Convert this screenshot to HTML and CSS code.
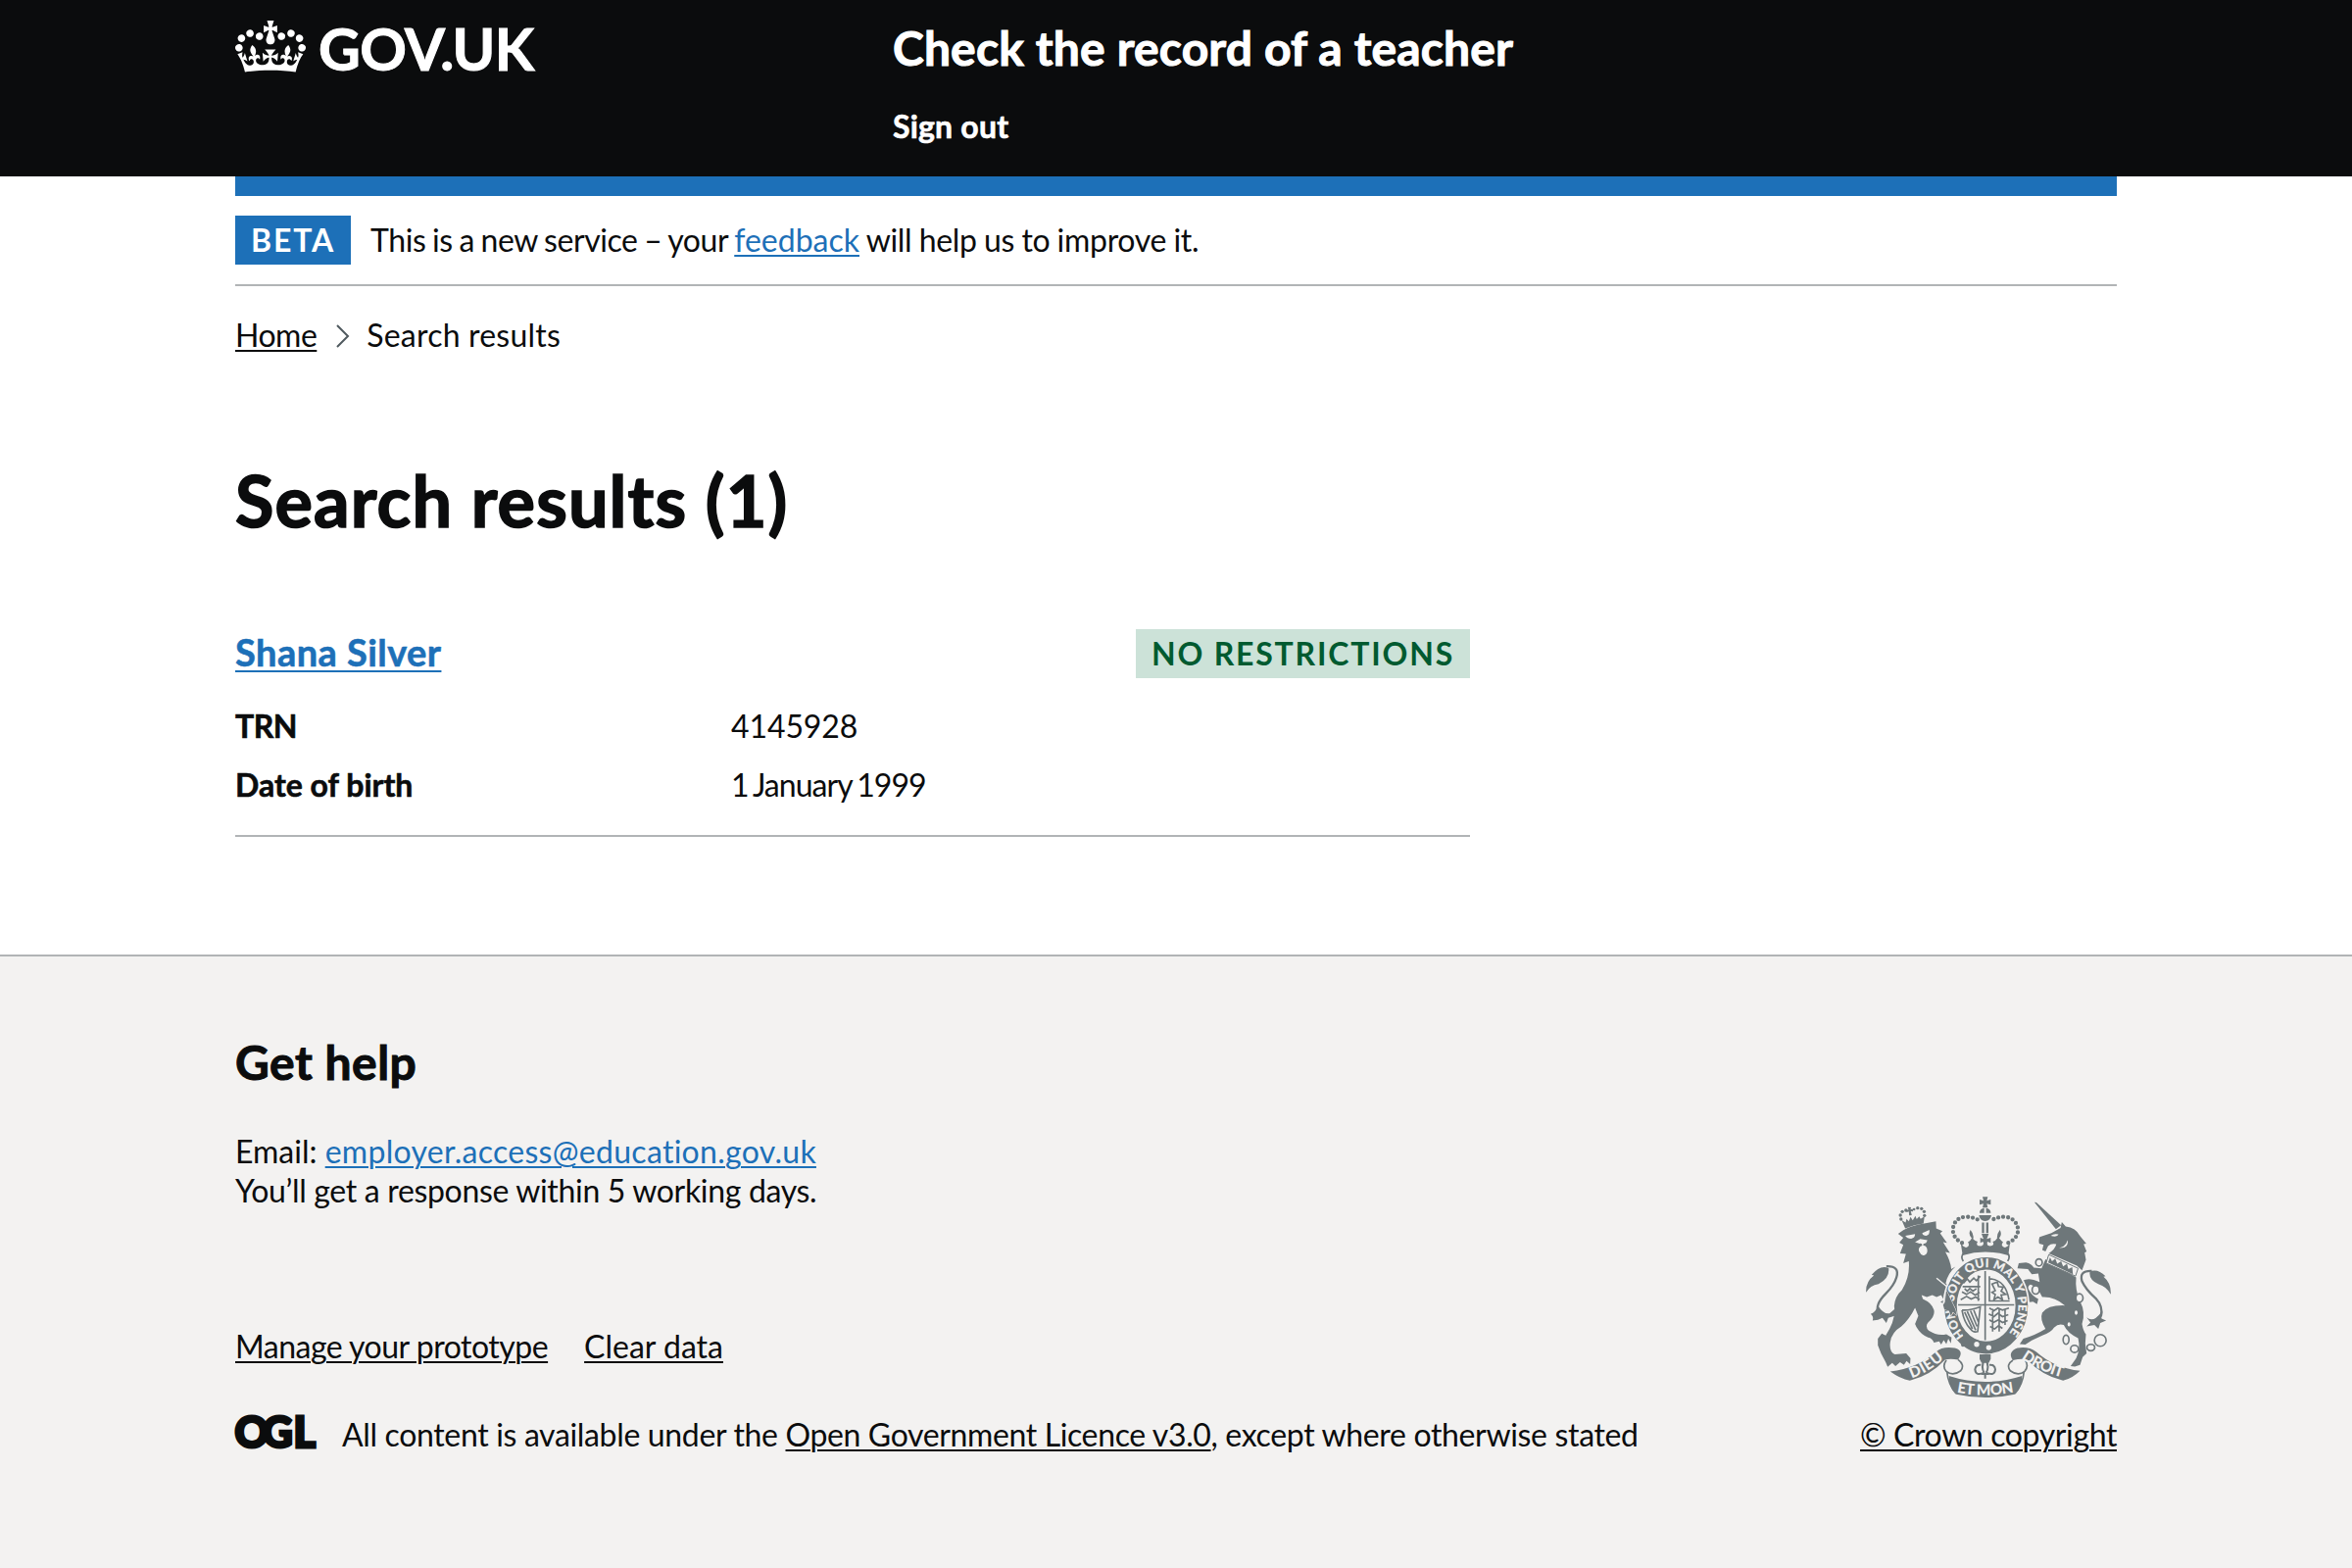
FILE: index.html
```html
<!DOCTYPE html>
<html lang="en">
<head>
<meta charset="utf-8">
<title>Search results (1) – Check the record of a teacher</title>
<link rel="stylesheet" href="styles.css">
</head>
<body>
<header class="header">
  <div class="container header-row">
    <a class="logo" href="#">
      <svg class="logo-crown" viewBox="0 0 132 97" aria-hidden="true"><path fill="currentColor" fill-rule="evenodd" d="M25 30.2c3.5 1.5 7.7-.2 9.1-3.7 1.5-3.6-.2-7.8-3.9-9.2-3.6-1.4-7.6.3-9.1 3.9-1.4 3.5.3 7.5 3.9 9zM9 39.5c3.6 1.5 7.8-.2 9.2-3.7 1.5-3.6-.2-7.8-3.9-9.1-3.6-1.5-7.6.2-9.1 3.8-1.4 3.5.3 7.5 3.8 9zM4.4 57.2c3.5 1.5 7.7-.2 9.1-3.8 1.5-3.6-.2-7.7-3.9-9.1-3.5-1.5-7.6.3-9.1 3.8-1.4 3.5.3 7.6 3.9 9.1zm38.3-21.4c3.5 1.5 7.7-.2 9.1-3.8 1.5-3.6-.2-7.7-3.9-9.1-3.6-1.5-7.6.3-9.1 3.8-1.3 3.6.4 7.7 3.9 9.1zm64.4-5.6c-3.6 1.5-7.8-.2-9.1-3.7-1.5-3.6.2-7.8 3.8-9.2 3.6-1.4 7.7.3 9.2 3.9 1.3 3.5-.4 7.5-3.9 9zm15.9 9.3c-3.6 1.5-7.7-.2-9.1-3.7-1.5-3.6.2-7.8 3.7-9.1 3.6-1.5 7.7.2 9.2 3.8 1.5 3.5-.3 7.5-3.8 9zm4.7 17.7c-3.6 1.5-7.8-.2-9.2-3.8-1.5-3.6.2-7.7 3.9-9.1 3.6-1.5 7.7.3 9.2 3.8 1.3 3.5-.4 7.6-3.9 9.1zM89.3 35.8c-3.6 1.5-7.8-.2-9.2-3.8-1.4-3.6.2-7.7 3.9-9.1 3.6-1.5 7.7.3 9.2 3.8 1.4 3.6-.3 7.7-3.9 9.1zM69.7 17.7l8.9 4.7V9.3l-8.9 2.8c-.2-.3-.5-.6-.9-.9L72.4 0H59.6l3.5 11.2c-.3.3-.6.5-.9.9l-8.8-2.8v13.1l8.8-4.7c.3.3.6.7.9.9l-5 15.4v.1c-.2.8-.4 1.6-.4 2.4 0 4.1 3.1 7.5 7 8.1h.2c.3 0 .7.1 1 .1.4 0 .7 0 1-.1h.2c4-.6 7.1-4.1 7.1-8.1 0-.8-.1-1.7-.4-2.4V34l-5.1-15.4c.4-.2.7-.6 1-.9zM66 92.8c16.9 0 32.8 1.1 47.1 3.2 4-16.9 8.9-26.7 14-33.5l-9.6-3.4c1 4.9 1.1 7.2 0 10.2-1.5-1.4-3-4.3-4.2-8.7L108.6 76c2.8-2 5-3.2 7.5-3.3-4.4 9.4-10 11.9-13.6 11.2-4.3-.8-6.3-4.6-5.6-7.9 1-4.7 5.7-5.9 8-.5 4.3-8.7-3-11.4-7.6-8.8 7.1-7.2 7.9-13.5 2.1-21.1-8 6.1-8.1 12.3-4.5 20.8-4.7-5.4-12.1-2.5-9.5 6.2 3.4-5.2 7.9-2 7.2 3.1-.6 4.3-6.4 7.8-13.5 7.2-10.3-.9-10.9-8-11.2-13.8 2.5-.5 7.1 1.8 11 7.3L80.2 60c-4.1 4.4-8 5.3-12.3 5.4 1.4-4.4 8-11.6 8-11.6H55.5s6.4 7.2 7.9 11.6c-4.2-.1-8-1-12.3-5.4l1.4 16.4c3.9-5.5 8.5-7.7 10.9-7.3-.3 5.8-.9 12.8-11.1 13.8-7.2.6-12.9-2.9-13.5-7.2-.7-5 3.8-8.3 7.1-3.1 2.7-8.7-4.6-11.6-9.4-6.2 3.7-8.5 3.6-14.7-4.6-20.8-5.8 7.6-5 13.9 2.2 21.1-4.7-2.6-11.9.1-7.7 8.8 2.3-5.5 7.1-4.2 8.1.5.7 3.3-1.3 7.1-5.7 7.9-3.5.7-9-1.8-13.5-11.2 2.5.1 4.7 1.3 7.5 3.3l-4.7-15.4c-1.2 4.4-2.7 7.2-4.3 8.7-1.1-3-.9-5.3 0-10.2l-9.5 3.4c5 6.9 9.9 16.7 14 33.5 14.8-2.1 30.8-3.2 47.7-3.2z"/></svg>
      <span class="logo-text">GOV.UK</span>
    </a>
    <div class="header-content">
      <a class="service-name" href="#">Check the record of a teacher</a>
      <nav><a class="nav-link" href="#">Sign out</a></nav>
    </div>
  </div>
</header>
<div class="container">
  <div class="phase">
    <strong class="tag tag-beta">BETA</strong>
    <span class="phase-text"><span class="phase-lead">This is a new service – your </span><a class="link" href="#">feedback</a><span class="phase-tail"> will help us to improve it.</span></span>
  </div>
  <nav class="crumbs">
    <a class="link-plain crumb-home" href="#">Home</a>
    <svg class="chevron" viewBox="0 0 14 24" aria-hidden="true"><path d="M1 1l11 11L1 23" fill="none" stroke="#505a5f" stroke-width="2"/></svg>
    <span class="crumb-here">Search results</span>
  </nav>
  <main class="main">
    <h1>Search results (1)</h1>
    <section class="result">
      <div class="result-head">
        <h2><a class="link" href="#">Shana Silver</a></h2>
        <strong class="tag tag-green">NO RESTRICTIONS</strong>
      </div>
      <dl class="facts">
        <dt class="trn">TRN</dt><dd class="trn-value">4145928</dd>
        <dt>Date of birth</dt><dd class="dob-value">1 January 1999</dd>
      </dl>
    </section>
  </main>
</div>
<footer class="footer">
  <div class="container">
    <h2 class="help-title">Get help</h2>
    <p class="help-text">Email: <a class="link email" href="#">employer.access@education.gov.uk</a><br><span class="reply">You’ll get a response within 5 working days.</span></p>
    <div class="footer-row">
      <div>
        <ul class="footer-links">
          <li><a class="link-plain manage" href="#">Manage your prototype</a></li>
          <li><a class="link-plain" href="#">Clear data</a></li>
        </ul>
        <div class="licence">
          <svg class="ogl" viewBox="0 0 82 34" aria-label="OGL"><text y="32" x="-.5 27.5 59.5">OGL</text></svg>
          <span class="licence-text">All content is available under the <a class="link-plain licence-link" href="#">Open Government Licence v3.0</a>, except where otherwise stated</span>
        </div>
      </div>
      <a class="copyright" href="#">
        <svg class="crest" viewBox="72 64 750 616" aria-hidden="true">
          <defs>
            <path id="garter" d="M375 489A99 119 0 1 1 505 489"/>
            <path id="dieu" d="M212 621Q264 604 322 552"/>
            <path id="mon" d="M350 664Q437 681 526 664"/>
            <path id="droit" d="M548 560Q606 601 676 619"/>
          </defs>
          <!-- lion -->
          <g class="ink">
            <circle cx="179" cy="133" r="5"/><circle cx="177" cy="121" r="5"/><circle cx="183" cy="110" r="5"/><circle cx="194" cy="106" r="5"/><circle cx="219" cy="103" r="4"/><circle cx="230" cy="99" r="5"/><circle cx="242" cy="101" r="5"/><circle cx="250" cy="110" r="5"/><circle cx="251" cy="122" r="5"/>
            <path d="M200 96l10 1-2 6 7-1 1 8-7-1 3 12-8 1-1-12-7 2-1-8 7 1zM181 136l12 8 3-12 7 8 5-14 7 11 8-14 4 10 8-8 4 7 12-7-3 22Q220 150 192 162z"/>
            <path d="M170 178L186 167Q215 152 250 147L286 140L287 162L306 170L299 177L320 206L308 204L329 237L315 234Q331 262 333 286L346 279Q322 300 316 330L338 352Q334 382 346 410L350 428L338 418L332 430L326 414L314 412L308 400L312 392L300 388L310 380L302 366L288 372L275 366L258 372L242 366L246 378Q274 390 280 412Q284 432 262 450Q252 462 264 475Q290 492 318 486L334 496L332 514L324 500L318 516L310 504L302 518L296 508L280 512Q275 498 262 496Q240 488 226 464L222 455L232 430L222 405Q205 440 180 462Q150 480 146 510Q142 540 160 548L195 545L208 560L207 578L196 568L188 580L176 572L162 584L152 574L138 586L132 572Q116 545 108 520L108 500L120 484L132 490Q165 440 158 400Q160 370 182 350Q207 310 203 262L186 268L194 240L176 238L186 212L174 205L186 190Z"/>
            <path d="M72 358Q70 325 96 306L89 304Q115 272 141 283Q145 315 110 332Q84 335 72 358Z"/>
            <path d="M108 398Q100 420 86 424Q96 432 92 444Q110 444 122 436L134 452L140 436L164 428L170 400L144 422Q126 426 108 398Z"/>
          </g>
          <path class="line thick" d="M134 278Q176 276 165 312Q158 336 132 362Q98 396 110 420"/>
          <g class="paper">
            <path d="M192 184l30-5q0 12-12 14-12 0-18-9zM244 176l22-10q2 16-10 18-10 0-12-8z"/>
            <path d="M222 204l16-10 22 4-4 8-8 3q-2 3 0 5a12 15 0 1 1-11 22 12 13 0 0 1 7-22q0-8-8-6z"/>
          </g>
          <path class="cut" d="M288 314L334 352"/>
          <!-- unicorn -->
          <g class="ink">
            <path d="M588 81L594 82L670 152L654 164Z"/>
            <path d="M604 188L640 176L668 160L672 142L684 156Q715 160 728 185L747 208L739 210L748 232L742 236L746 258L734 290L718 276L632 238Q652 225 655 210Q640 206 630 216L622 232L612 228L616 212L603 208Q600 198 604 188Z"/>
            <path d="M622 256L716 312Q712 350 728 385Q746 420 734 455Q738 478 746 486L744 515L748 545L736 556L728 580L712 585L699 584L716 560Q730 530 722 498Q690 484 678 458Q662 452 648 466Q640 480 612 490L580 505L560 518L543 516L554 500Q590 490 622 470Q604 440 612 420Q630 396 682 398Q650 370 612 372Q596 340 576 334Q564 340 572 352Q584 372 600 378L596 394L584 386L572 388L560 362Q546 338 552 322Q570 310 604 326L600 300L580 302L568 286L536 284L540 268L562 266Q580 270 586 282L610 284Z"/>
            <path d="M822 364Q824 330 800 310L806 308Q782 284 758 294Q754 318 784 332Q810 340 822 364Z"/>
            <path d="M748 434Q768 452 792 420L794 438L808 444L790 452L784 470L772 458L748 462L760 450Z"/>
          </g>
          <path class="line thick" d="M764 292Q724 290 734 324Q746 350 776 376Q800 402 792 432"/>
          <path class="collar" d="M632 242L722 284L714 308L624 268Z"/>
          <path class="ink" d="M630 266L636 250L642 262L652 254L658 270L670 262L676 278L688 270L692 286L704 280L706 302Z"/>
          <g class="paper"><path d="M638 184q10-8 24-4-4 10-24 4zM664 222q20-4 26-24 4 24-26 24z"/></g>
          <g class="chain"><ellipse cx="602" cy="266" rx="10" ry="11"/><ellipse cx="592" cy="350" rx="11" ry="13"/><ellipse cx="726" cy="375" rx="11" ry="13"/><ellipse cx="716" cy="420" rx="7" ry="9"/><ellipse cx="694" cy="456" rx="7" ry="9"/><ellipse cx="685" cy="503" rx="9" ry="14"/><ellipse cx="711" cy="531" rx="12" ry="11"/><ellipse cx="761" cy="527" rx="12" ry="10"/><circle cx="790" cy="505" r="18"/></g>
          <!-- crown -->
          <g class="ink">
            <path d="M429 65h16l-3 12 12-4v16l-12-3 3 12h-16l3-12-12 3V73l12 4z"/>
            <path d="M420 112Q422 100 434 99V114H420ZM454 112Q452 100 440 99V114H454ZM418 121H456Q454 138 437 139Q420 138 418 121ZM427 144h7v32h-7zM440 144h7v32h-7z"/>
            <path d="M362 206Q366 216 378 220Q392 216 384 204Q392 200 396 192Q384 180 392 166Q404 180 400 194Q406 200 414 202Q406 216 424 216Q436 212 430 202L422 206V190L432 194L426 178H448L442 194L454 190V206L444 202Q440 214 452 216Q468 214 460 202Q470 200 474 192Q472 180 482 166Q490 180 480 192Q486 200 492 204Q482 216 498 220Q510 216 513 206L508 244Q437 224 368 244Z"/>
          </g>
          <path class="beads" d="M366 206Q338 192 338 164Q342 130 376 126Q402 126 420 138M508 206Q538 192 538 164Q532 130 498 126Q474 126 454 138"/>
          <path class="line" d="M372 236Q437 220 504 236Q516 246 506 262M372 236Q360 248 370 262"/>
          <!-- garter and shield -->
          <ellipse class="halo" cx="440" cy="398" rx="133" ry="154"/>
          <ellipse class="ring" cx="440" cy="398" rx="109" ry="129"/>
          <path class="line" d="M437 292V504M354 396H526"/>
          <text class="motto"><textPath href="#garter" textLength="530">HONI SOIT QUI MAL Y PENSE</textPath></text>
          <path class="charge" d="M368 340h54M370 330l12-14 8 10 12-12 8 8 12-14M366 356l14 8 12-8 14 10 14-8M362 380l18-10 14 8 14-6 12 8M374 346l8 8 8-8 10 8 10-8M416 306v78M450 406l14 8 12-8 14 6 20-6M448 424l16 8 12-10 14 10 18-6M450 442l12 8 16-8 12 8 16-6M452 462l14 8 12-10 12 8M460 408v70M480 408v70M498 408v50"/>
          <path class="charge" d="M450 308V384H512M452 316Q500 320 510 380M458 332l16-6 4 14 14 2-6 12 14 10-14 2 4 14-14-8-12 8 4-16-10-6 10-6z"/>
          <path class="line" d="M366 412Q390 414 422 402L414 478Q400 482 392 470Q372 450 366 412M382 416L408 474M392 414L412 462M402 412L416 448M374 418L398 470"/>
          <path class="ink" d="M362 478Q384 476 388 494Q440 520 505 512L492 532Q430 556 380 520Q364 530 362 516L372 508L360 502L372 494Z"/>
          <g class="paper"><circle cx="411" cy="517" r="8"/><circle cx="448" cy="527" r="8"/></g>
          <path class="ink paw" d="M318 352L346 410L350 428L338 418L332 430L326 414L312 410L308 396L314 388Z"/>
          <!-- fleur and scroll -->
          <path class="ink" d="M420 548h34v14l-6 12h-22l-6-12z"/>
          <path class="fleur" d="M437 562Q422 584 434 604M437 562Q452 584 440 604M434 604Q408 616 406 594Q408 578 424 580M440 604Q466 616 468 594Q466 578 450 580M426 608H448M437 608V622"/>
          <g class="ink">
            <path d="M146 600Q230 590 286 540Q306 522 344 528Q374 536 354 564Q330 560 314 564Q270 612 206 628Q176 622 146 600Z"/>
            <path d="M728 598Q650 590 594 540Q570 522 536 528Q504 540 522 566Q548 560 566 564Q610 612 676 628Q704 622 728 598Z"/>
            <path d="M326 614Q437 650 550 614Q550 650 528 670Q437 690 348 670Q326 650 326 614Z"/>
          </g>
          <path class="line" d="M354 564Q376 580 362 598Q338 616 318 600Q304 584 318 566M320 602Q324 640 348 668M522 566Q500 580 514 598Q538 616 558 600Q572 584 560 566M556 602Q552 640 528 668"/>
          <g class="scroll"><text><textPath href="#dieu" textLength="116">DIEU</textPath></text><text><textPath href="#mon" textLength="176">ET MON</textPath></text><text><textPath href="#droit" textLength="138">DROIT</textPath></text></g>
        </svg>
        <span class="link-plain copyright-text">© Crown copyright</span>
      </a>
    </div>
  </div>
</footer>
</body>
</html>
```
FILE: styles.css
```css
* { box-sizing: border-box; }
body {
  margin: 0;
  min-height: 1600px;
  display: flex;
  flex-direction: column;
  background: #fff;
  color: #0b0c0d;
  font: 32px/40px Lato, "Open Sans", sans-serif;
}
h1, h2, p, ul, dl, dd { margin: 0; padding: 0; }
h1, h2, dt, .service-name, .nav-link, .logo-text { -webkit-text-stroke: .6px currentColor; }
a { color: inherit; text-decoration: none; }
.container { width: 1920px; margin: 0 auto; }

.link, .link-plain {
  text-decoration: underline;
  text-decoration-thickness: 2px;
  text-underline-offset: 3px;
}
.link { color: #1d70b8; }

.header { height: 180px; background: #0b0c0d; color: #fff; }
.header-row { display: flex; }
.logo { display: flex; width: 671px; height: 74px; padding-top: 21px; gap: 13px; }
.logo-crown { width: 72px; height: 53px; }
.logo-text { font-size: 59px; font-weight: 700; line-height: 57px; letter-spacing: -.6px; -webkit-text-stroke-width: 1px; }
.header-content { padding-top: 19px; }
.service-name { display: block; font-size: 48px; font-weight: 700; line-height: 60px; letter-spacing: .15px; -webkit-text-stroke-width: 1px; }
.header-content nav { margin-top: 30px; }
.nav-link { font-weight: 700; letter-spacing: .2px; }

.phase {
  display: flex;
  align-items: center;
  gap: 20px;
  height: 112px;
  border-top: 20px solid #1d70b8;
  border-bottom: 2px solid #b1b4b6;
}
.tag { height: 50px; padding: 0 16px; line-height: 50px; font-weight: 700; white-space: nowrap; }
.tag-beta { width: 118px; background: #1d70b8; color: #fff; letter-spacing: 1.9px; }
.tag-green { width: 341px; background: #cce2d8; color: #005a30; letter-spacing: 1.8px; }
.phase-text { white-space: pre; }
.phase-lead { letter-spacing: -.42px; word-spacing: -1.1px; }
.phase-tail { letter-spacing: -.3px; word-spacing: -.6px; }

.crumbs { display: flex; align-items: center; margin-top: 30px; }
.crumb-home { letter-spacing: -.5px; }
.crumb-here { letter-spacing: .2px; }
.chevron { width: 14px; height: 24px; margin: 1px 17px 0 20px; }

.main { padding-top: 108px; }
h1 { font-size: 72px; line-height: 80px; letter-spacing: 1.1px; -webkit-text-stroke-width: 1.6px; }
.result { width: 1260px; margin-top: 92px; padding-bottom: 31px; border-bottom: 2px solid #b1b4b6; }
.result-head { display: flex; justify-content: space-between; height: 50px; }
.result-head h2 { font-size: 38px; line-height: 47px; letter-spacing: .45px; }
.result-head .link { text-underline-offset: 4px; }
.facts { display: grid; grid-template-columns: 506px 1fr; row-gap: 20px; margin: 29px 0 0; }
.facts dt { font-weight: 700; }
.trn { letter-spacing: -.5px; }
.trn-value { letter-spacing: -.1px; }
.dob-value { letter-spacing: -.95px; word-spacing: -2px; }

.footer { flex: 1; margin-top: 120px; padding-top: 78px; border-top: 2px solid #b1b4b6; background: #f3f2f1; }
.help-title { font-size: 48px; line-height: 60px; letter-spacing: .5px; -webkit-text-stroke-width: 1px; }
.help-text { margin-top: 41px; }
.email { letter-spacing: .29px; }
.reply { letter-spacing: -.33px; }
.footer-row { display: flex; justify-content: space-between; align-items: flex-end; margin-top: -14px; }
.footer-links { display: flex; gap: 37px; margin: 0; list-style: none; }
.manage { letter-spacing: -.5px; }
.licence { display: flex; margin-top: 50px; }
.ogl { width: 82px; height: 34px; margin: 1px 27px 0 0; overflow: visible; }
.ogl text { font: 900 43px Lato, sans-serif; fill: #0b0c0d; stroke: #0b0c0d; stroke-width: 3; }
.licence-text { letter-spacing: -.34px; }
.licence-link { letter-spacing: -.37px; }
.copyright { display: flex; flex-direction: column; align-items: center; }
.crest { width: 250px; height: 205px; margin-bottom: 18px; }
.copyright-text { letter-spacing: -.38px; }

.ink { fill: #6e777a; }
.paper { fill: #f3f2f1; }
.line { fill: none; stroke: #6e777a; stroke-width: 5; }
.thick { stroke-width: 7; }
.cut { fill: none; stroke: #f3f2f1; stroke-width: 4; }
.paw { stroke: #f3f2f1; stroke-width: 3; paint-order: stroke; }
.collar { fill: #f3f2f1; stroke: #6e777a; stroke-width: 3; }
.chain { fill: #f3f2f1; stroke: #6e777a; stroke-width: 5; }
.beads { fill: none; stroke: #6e777a; stroke-width: 13; stroke-linecap: round; stroke-dasharray: 0 15; }
.halo { fill: #f3f2f1; }
.ring { fill: #f3f2f1; stroke: #6e777a; stroke-width: 38; }
.charge { fill: none; stroke: #6e777a; stroke-width: 5; }
.fleur { fill: none; stroke: #6e777a; stroke-width: 6; }
.motto { font: 700 36px Lato, sans-serif; fill: #f3f2f1; stroke: #f3f2f1; stroke-width: 1; }
.scroll { font: 900 46px Lato, sans-serif; fill: #f3f2f1; }
```
